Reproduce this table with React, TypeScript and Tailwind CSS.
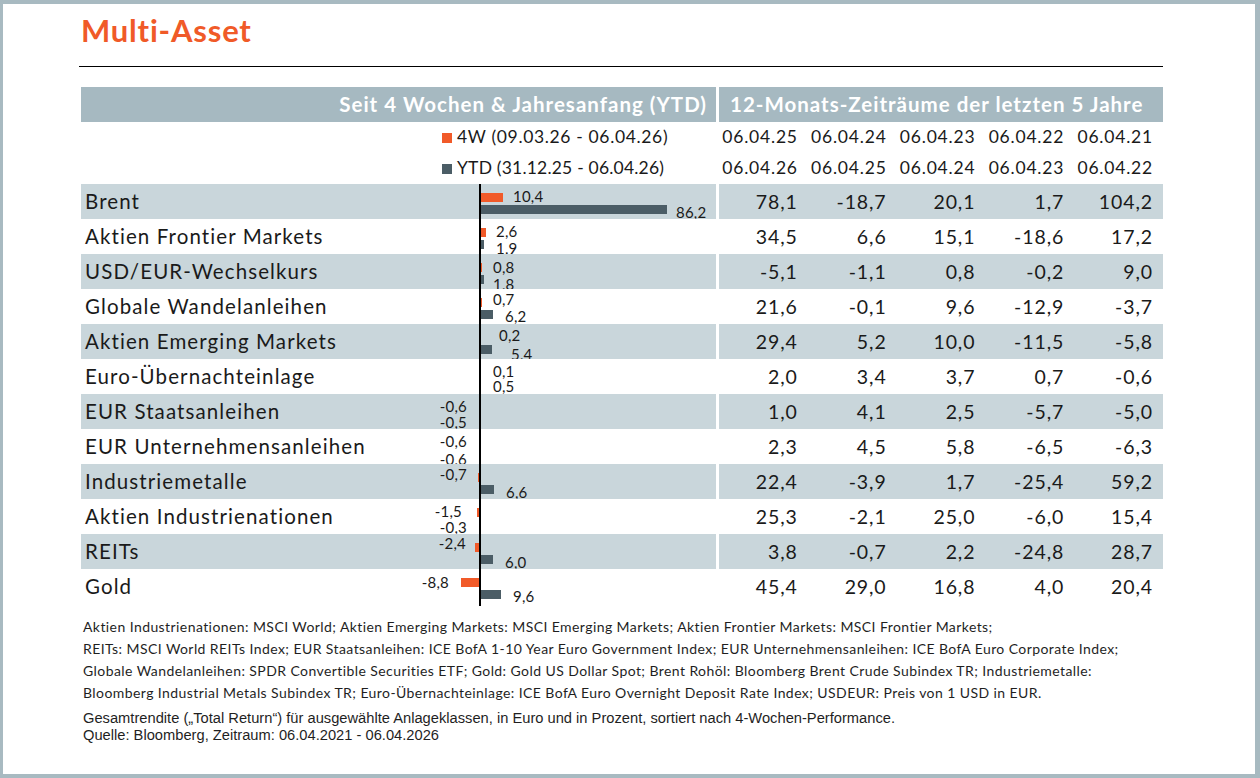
import React from "react";

type Lbl = { d: number; y: number };
type Row = {
  name: string;
  w4: number;
  ytd: number;
  l1: Lbl;
  l2: Lbl;
  vals: string[];
};

const rows: Row[] = [
  { name: "Brent", w4: 10.4, ytd: 86.2, l1: { d: 33, y: 12 }, l2: { d: 196, y: 28 }, vals: ["78,1", "-18,7", "20,1", "1,7", "104,2"] },
  { name: "Aktien Frontier Markets", w4: 2.6, ytd: 1.9, l1: { d: 16, y: 12 }, l2: { d: 16, y: 29 }, vals: ["34,5", "6,6", "15,1", "-18,6", "17,2"] },
  { name: "USD/EUR-Wechselkurs", w4: 0.8, ytd: 1.8, l1: { d: 13, y: 13 }, l2: { d: 13, y: 30 }, vals: ["-5,1", "-1,1", "0,8", "-0,2", "9,0"] },
  { name: "Globale Wandelanleihen", w4: 0.7, ytd: 6.2, l1: { d: 13, y: 10 }, l2: { d: 25, y: 27 }, vals: ["21,6", "-0,1", "9,6", "-12,9", "-3,7"] },
  { name: "Aktien Emerging Markets", w4: 0.2, ytd: 5.4, l1: { d: 19, y: 11 }, l2: { d: 31, y: 30 }, vals: ["29,4", "5,2", "10,0", "-11,5", "-5,8"] },
  { name: "Euro-Übernachteinlage", w4: 0.1, ytd: 0.5, l1: { d: 13, y: 12 }, l2: { d: 13, y: 27 }, vals: ["2,0", "3,4", "3,7", "0,7", "-0,6"] },
  { name: "EUR Staatsanleihen", w4: -0.6, ytd: -0.5, l1: { d: 13, y: 12 }, l2: { d: 13, y: 28 }, vals: ["1,0", "4,1", "2,5", "-5,7", "-5,0"] },
  { name: "EUR Unternehmensanleihen", w4: -0.6, ytd: -0.6, l1: { d: 13, y: 12 }, l2: { d: 13, y: 30 }, vals: ["2,3", "4,5", "5,8", "-6,5", "-6,3"] },
  { name: "Industriemetalle", w4: -0.7, ytd: 6.6, l1: { d: 13, y: 10 }, l2: { d: 26, y: 28 }, vals: ["22,4", "-3,9", "1,7", "-25,4", "59,2"] },
  { name: "Aktien Industrienationen", w4: -1.5, ytd: -0.3, l1: { d: 18, y: 12 }, l2: { d: 13, y: 28 }, vals: ["25,3", "-2,1", "25,0", "-6,0", "15,4"] },
  { name: "REITs", w4: -2.4, ytd: 6.0, l1: { d: 14, y: 9 }, l2: { d: 25, y: 28 }, vals: ["3,8", "-0,7", "2,2", "-24,8", "28,7"] },
  { name: "Gold", w4: -8.8, ytd: 9.6, l1: { d: 31, y: 13 }, l2: { d: 33, y: 27 }, vals: ["45,4", "29,0", "16,8", "4,0", "20,4"] },
];

const AXIS = 398;
const SCALE = 2.17;
const fmt = (v: number) => v.toFixed(1).replace(".", ",");

function Bar({ v, top, color }: { v: number; top: number; color: string }) {
  const w = Math.abs(v) * SCALE;
  const left = v >= 0 ? AXIS + 1 : AXIS + 1 - w;
  return (
    <div
      className={`absolute h-[9px] ${color}`}
      style={{ left, width: w, top }}
    />
  );
}

function Label({ v, l }: { v: number; l: Lbl }) {
  const style: React.CSSProperties =
    v >= 0
      ? { left: AXIS + 1 + l.d, top: l.y - 7 }
      : { right: 635 - (AXIS + 1) + l.d, top: l.y - 7 };
  return (
    <div className="absolute text-[15px] leading-[14px] tracking-[0.2px] text-[#1a1a1a]" style={style}>
      {fmt(v)}
    </div>
  );
}

export default function App() {
  return (
    <div className="w-[1260px] h-[778px] bg-[#a8bac1] pt-[4px] pl-[3px] pr-[5px] pb-[4px] font-['Lato',sans-serif]">
      <div className="bg-white w-full h-full flex flex-col">
        <div className="pl-[78px] pt-[11px] h-[62px]">
          <h1 className="text-[31px] leading-[31px] font-bold tracking-[0.8px] text-[#f05a28]">Multi-Asset</h1>
        </div>
        <div className="ml-[76px] mr-[92px] h-px bg-black" />
        <div className="ml-[78px] mr-[92px] mt-[20px]">
          {/* header */}
          <div className="flex h-[35px] gap-[3px]">
            <div className="w-[635px] bg-[#a6b9c1] flex items-center justify-end pr-[9px] text-white font-bold text-[20.5px] tracking-[1px]">
              Seit 4 Wochen &amp; Jahresanfang (YTD)
            </div>
            <div className="flex-1 bg-[#a6b9c1] flex items-center pl-[11px] text-white font-bold text-[20.5px] tracking-[1px]">
              12-Monats-Zeiträume der letzten 5 Jahre
            </div>
          </div>
          {/* legend / dates */}
          <div className="flex gap-[3px] text-[#1a1a1a]">
            <div className="w-[635px] pl-[361px] flex flex-col text-[17.5px] tracking-[0.65px]">
              <div className="h-[31px] flex items-center gap-[5px]">
                <span className="w-[10px] h-[10px] bg-[#f15a29] inline-block" />
                <span>4W (09.03.26 - 06.04.26)</span>
              </div>
              <div className="h-[31px] flex items-center gap-[5px]">
                <span className="w-[10px] h-[10px] bg-[#4b5d66] inline-block" />
                <span className="tracking-[0.2px]">YTD (31.12.25 - 06.04.26)</span>
              </div>
            </div>
            <div className="flex-1 flex flex-col text-[17.5px] tracking-[0.8px]">
              <div className="h-[31px] grid grid-cols-5 items-center">
                {["06.04.25", "06.04.24", "06.04.23", "06.04.22", "06.04.21"].map((d) => (
                  <div key={d} className="text-right pr-[10px]">{d}</div>
                ))}
              </div>
              <div className="h-[31px] grid grid-cols-5 items-center">
                {["06.04.26", "06.04.25", "06.04.24", "06.04.23", "06.04.22"].map((d) => (
                  <div key={d} className="text-right pr-[10px]">{d}</div>
                ))}
              </div>
            </div>
          </div>
          {/* body */}
          <div className="relative">
            {rows.map((r, i) => {
              const stripe = i % 2 === 0 ? "bg-[#c9d6db]" : "bg-white";
              return (
                <div key={r.name} className="flex h-[35px] gap-[3px] text-[#1a1a1a]">
                  <div className={`w-[635px] relative ${stripe} flex items-center pl-[4px] text-[20.5px] tracking-[1.1px]`}>
                    <span>{r.name}</span>
                    <Bar v={r.w4} top={9} color="bg-[#f15a29]" />
                    <Bar v={r.ytd} top={21} color="bg-[#4b5d66]" />
                    <Label v={r.w4} l={r.l1} />
                    <Label v={r.ytd} l={r.l2} />
                  </div>
                  <div className={`flex-1 ${stripe} grid grid-cols-5 items-center text-[19.5px] tracking-[0.9px]`}>
                    {r.vals.map((v, k) => (
                      <div key={k} className="text-right pr-[10px]">{v}</div>
                    ))}
                  </div>
                </div>
              );
            })}
            <div className="absolute left-[398px] top-0 -bottom-[2px] w-[1.5px] bg-black" />
          </div>
          {/* footnotes */}
          <div className="mt-[12px] pl-[2px] text-[14px] leading-[22px] tracking-[0.42px] text-[#1f1f1f]">
            <p>Aktien Industrienationen: MSCI World; Aktien Emerging Markets: MSCI Emerging Markets; Aktien Frontier Markets: MSCI Frontier Markets;</p>
            <p>REITs: MSCI World REITs Index; EUR Staatsanleihen: ICE BofA 1-10 Year Euro Government Index; EUR Unternehmensanleihen: ICE BofA Euro Corporate Index;</p>
            <p>Globale Wandelanleihen: SPDR Convertible Securities ETF; Gold: Gold US Dollar Spot; Brent Rohöl: Bloomberg Brent Crude Subindex TR; Industriemetalle:</p>
            <p>Bloomberg Industrial Metals Subindex TR; Euro-Übernachteinlage: ICE BofA Euro Overnight Deposit Rate Index; USDEUR: Preis von 1 USD in EUR.</p>
          </div>
          <div className="mt-[6px] pl-[2px] font-['Liberation_Sans',Arial,sans-serif] text-[14.7px] leading-[17px] text-[#1f1f1f]">
            <p>Gesamtrendite („Total Return“) für ausgewählte Anlageklassen, in Euro und in Prozent, sortiert nach 4-Wochen-Performance.</p>
            <p>Quelle: Bloomberg, Zeitraum: 06.04.2021 - 06.04.2026</p>
          </div>
        </div>
      </div>
    </div>
  );
}
